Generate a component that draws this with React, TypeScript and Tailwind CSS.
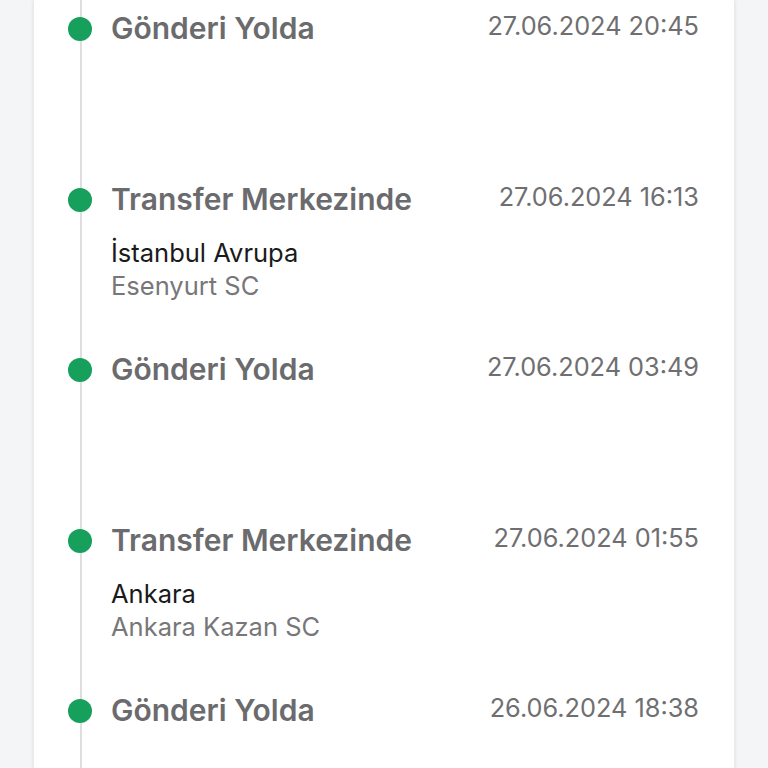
const events = [
  { title: "Gönderi Yolda", date: "27.06.2024 20:45" },
  { title: "Transfer Merkezinde", date: "27.06.2024 16:13", place: "İstanbul Avrupa", branch: "Esenyurt SC" },
  { title: "Gönderi Yolda", date: "27.06.2024 03:49" },
  { title: "Transfer Merkezinde", date: "27.06.2024 01:55", place: "Ankara", branch: "Ankara Kazan SC" },
  { title: "Gönderi Yolda", date: "26.06.2024 18:38" },
];

export default function App() {
  return (
    <div
      className="h-[768px] overflow-hidden bg-[#f4f5f7] px-[33px]"
      style={{ fontFamily: "Inter, 'Noto Sans', sans-serif" }}
    >
      <div className="relative h-full border-x border-[#ebebed] bg-white pl-[34px] pr-[35px] shadow-sm">
        <div className="absolute left-[46px] top-0 bottom-0 w-[2px] bg-[#dedede]" />
        <div className="relative pt-[10px]">
          {events.map((e, i) => (
            <div key={i} className="h-[170.5px]">
              <div className="flex items-center">
                <div className="h-6 w-6 shrink-0 rounded-full bg-[#16a05b]" />
                <div className="ml-[19px] -mt-[2px] text-[30px] leading-[40px] font-semibold text-[#6b6b6e]">
                  {e.title}
                </div>
                <div className="ml-auto -mt-[6px] text-[25.3px] leading-[40px] text-[#6f6f72]">{e.date}</div>
              </div>
              {e.place && (
                <div className="ml-[43px] mt-[17px] text-[25.5px] leading-[33px]">
                  <div className="text-[#1a1a1a]">{e.place}</div>
                  <div className="text-[#77777a]">{e.branch}</div>
                </div>
              )}
            </div>
          ))}
        </div>
      </div>
    </div>
  );
}
